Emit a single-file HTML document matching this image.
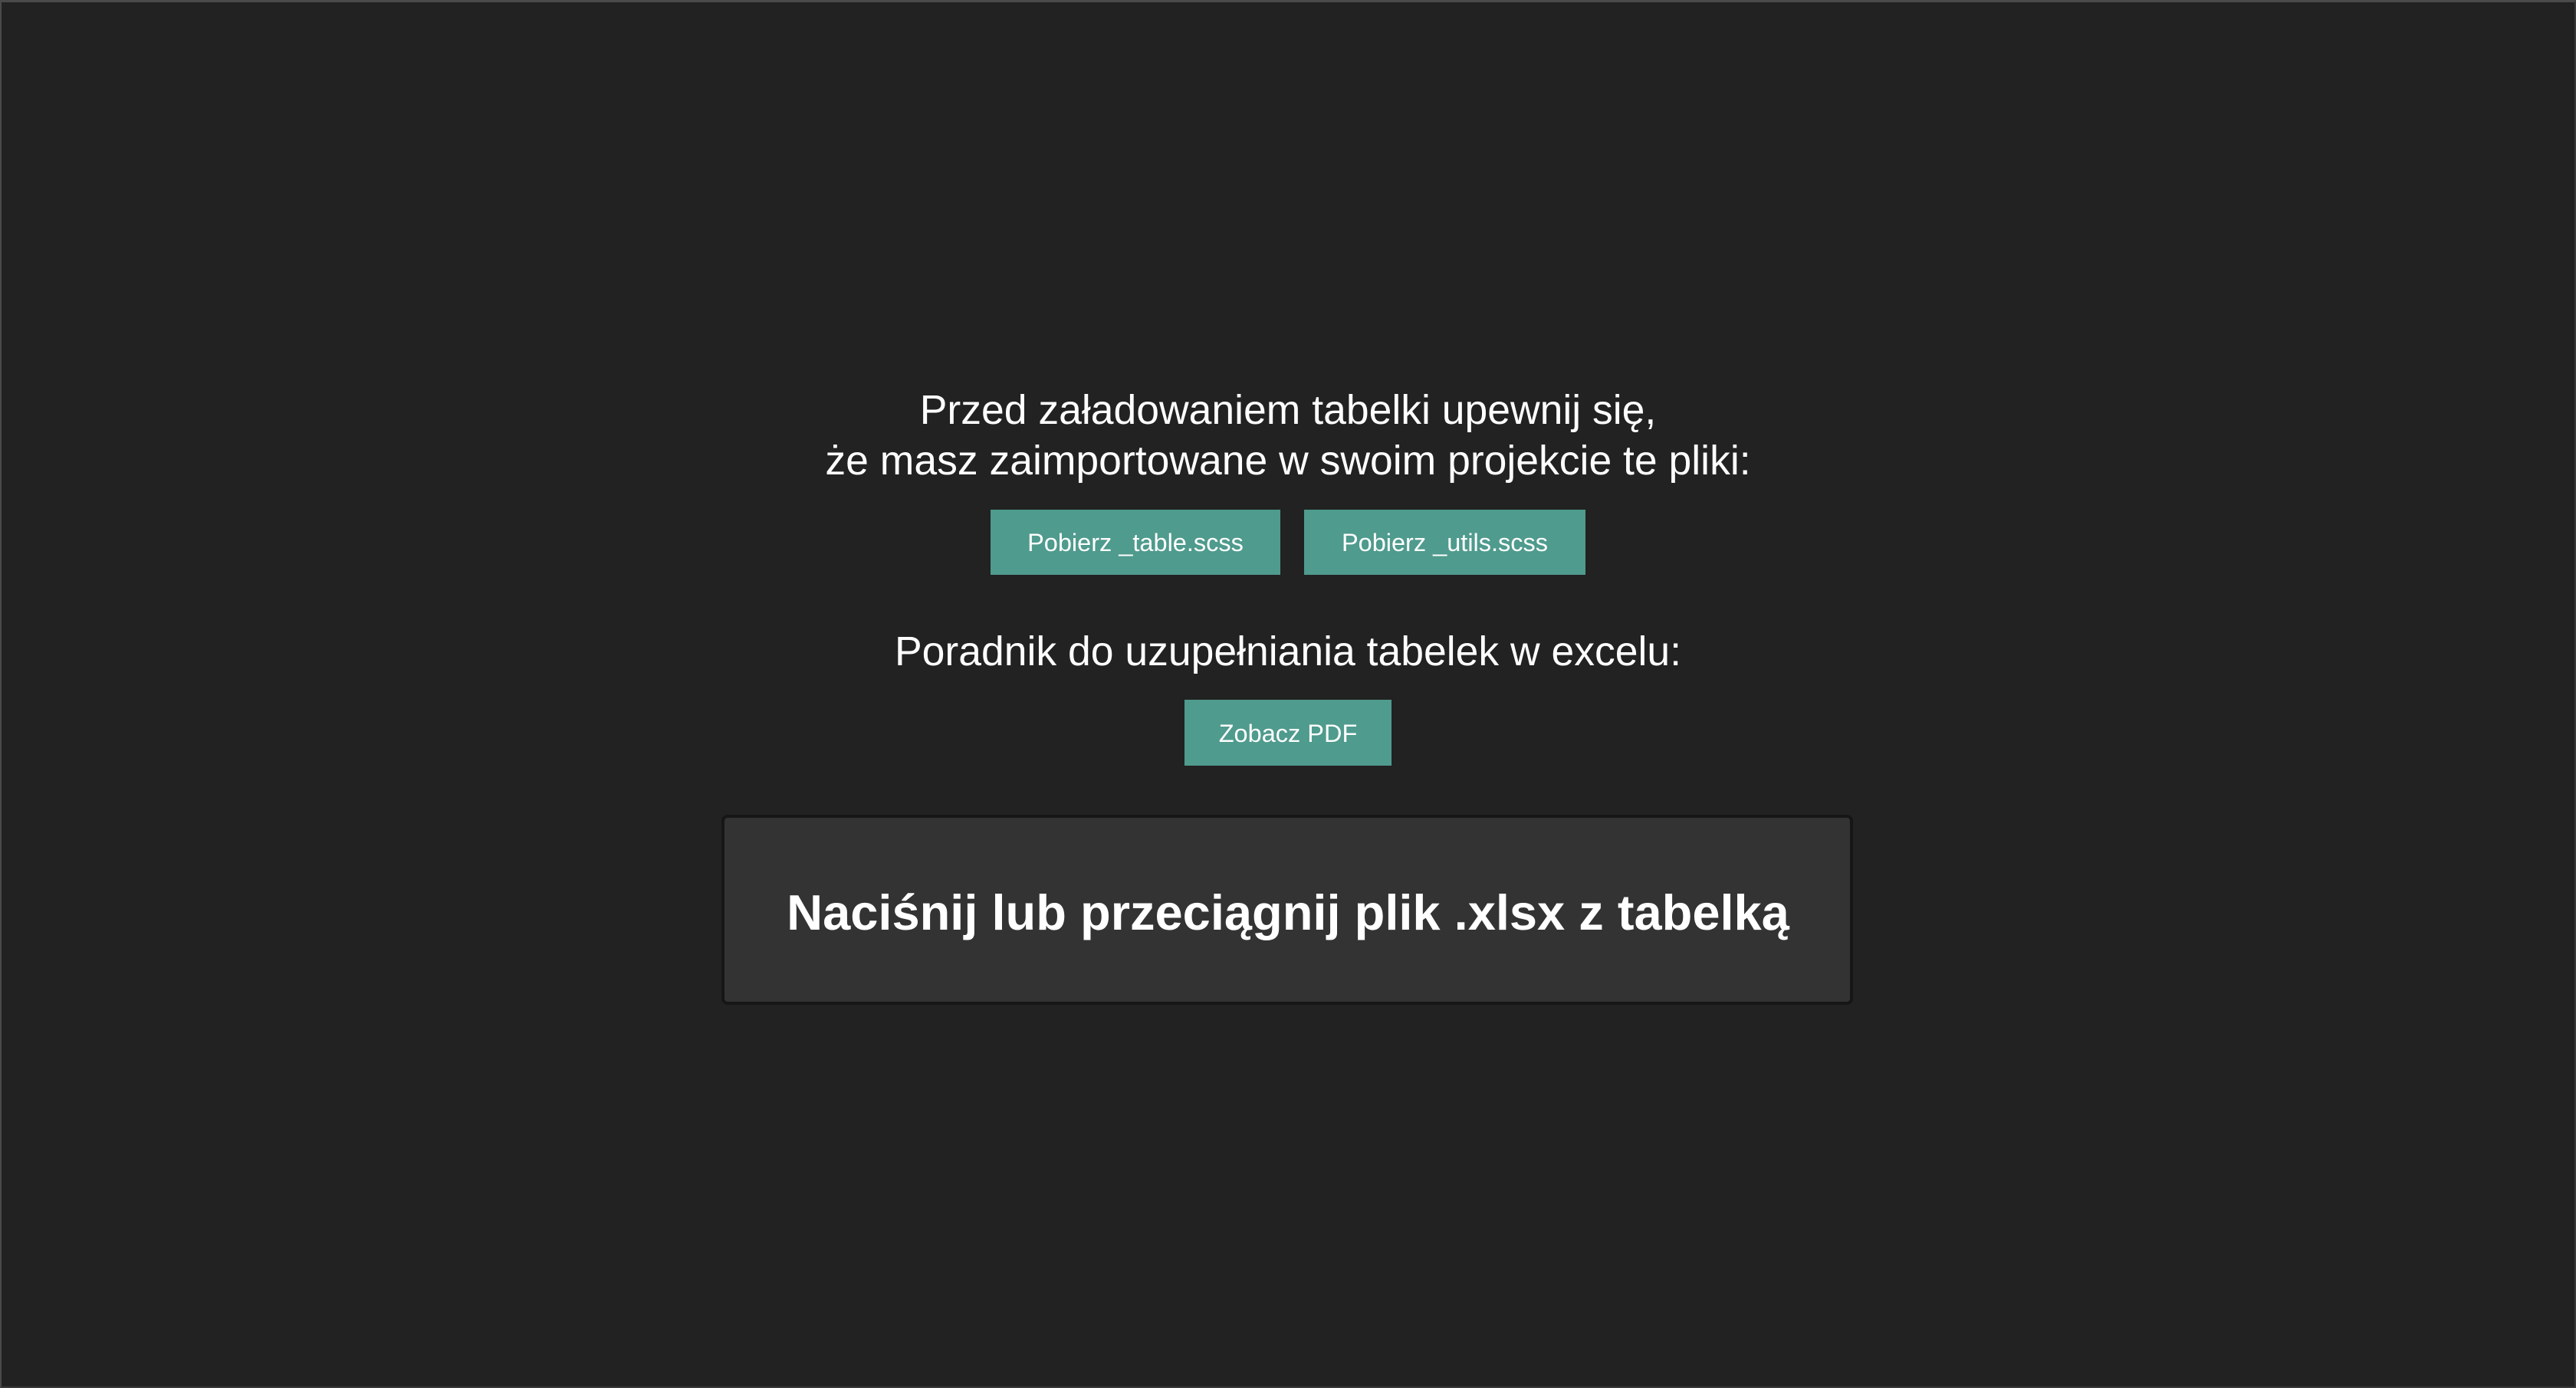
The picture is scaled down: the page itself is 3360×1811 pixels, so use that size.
<!DOCTYPE html>
<html><head><meta charset="utf-8"><style>
html,body{margin:0;padding:0;}
body{width:3360px;height:1810px;background:#222222;position:relative;overflow:hidden;font-family:"Liberation Sans",sans-serif;color:#fff;}
.frame{position:absolute;left:0;top:0;width:3356px;height:1806px;border-top:3px solid #4a4a4a;border-left:2px solid #4a4a4a;border-right:2px solid #3a3a3a;border-bottom:2px solid #3a3a3a;}
.t{position:absolute;left:0;width:3360px;text-align:center;white-space:nowrap;}
.p{font-size:53.5px;line-height:66px;}
.btn{position:absolute;background:#4f9b8e;color:#fff;font-size:32.5px;display:flex;align-items:center;justify-content:center;padding-top:2px;box-sizing:border-box;}
.drop{position:absolute;left:941px;top:1063px;width:1476px;height:248px;box-sizing:border-box;background:#333333;border:4px solid #161616;border-radius:8px;}
</style></head><body>
<div class="frame"></div>
<div class="t p" style="top:503px;">Przed załadowaniem tabelki upewnij się,<br>że masz zaimportowane w swoim projekcie te pliki:</div>
<div class="btn" style="left:1292px;top:665px;width:378px;height:85px;">Pobierz _table.scss</div>
<div class="btn" style="left:1701px;top:665px;width:367px;height:85px;">Pobierz _utils.scss</div>
<div class="t p" style="top:818px;">Poradnik do uzupełniania tabelek w excelu:</div>
<div class="btn" style="left:1545px;top:913px;width:270px;height:86px;">Zobacz PDF</div>
<div class="drop"></div>
<div class="t" style="top:1156px;font-size:65px;line-height:69px;font-weight:bold;">Naciśnij lub przeciągnij plik .xlsx z tabelką</div>
</body></html>
